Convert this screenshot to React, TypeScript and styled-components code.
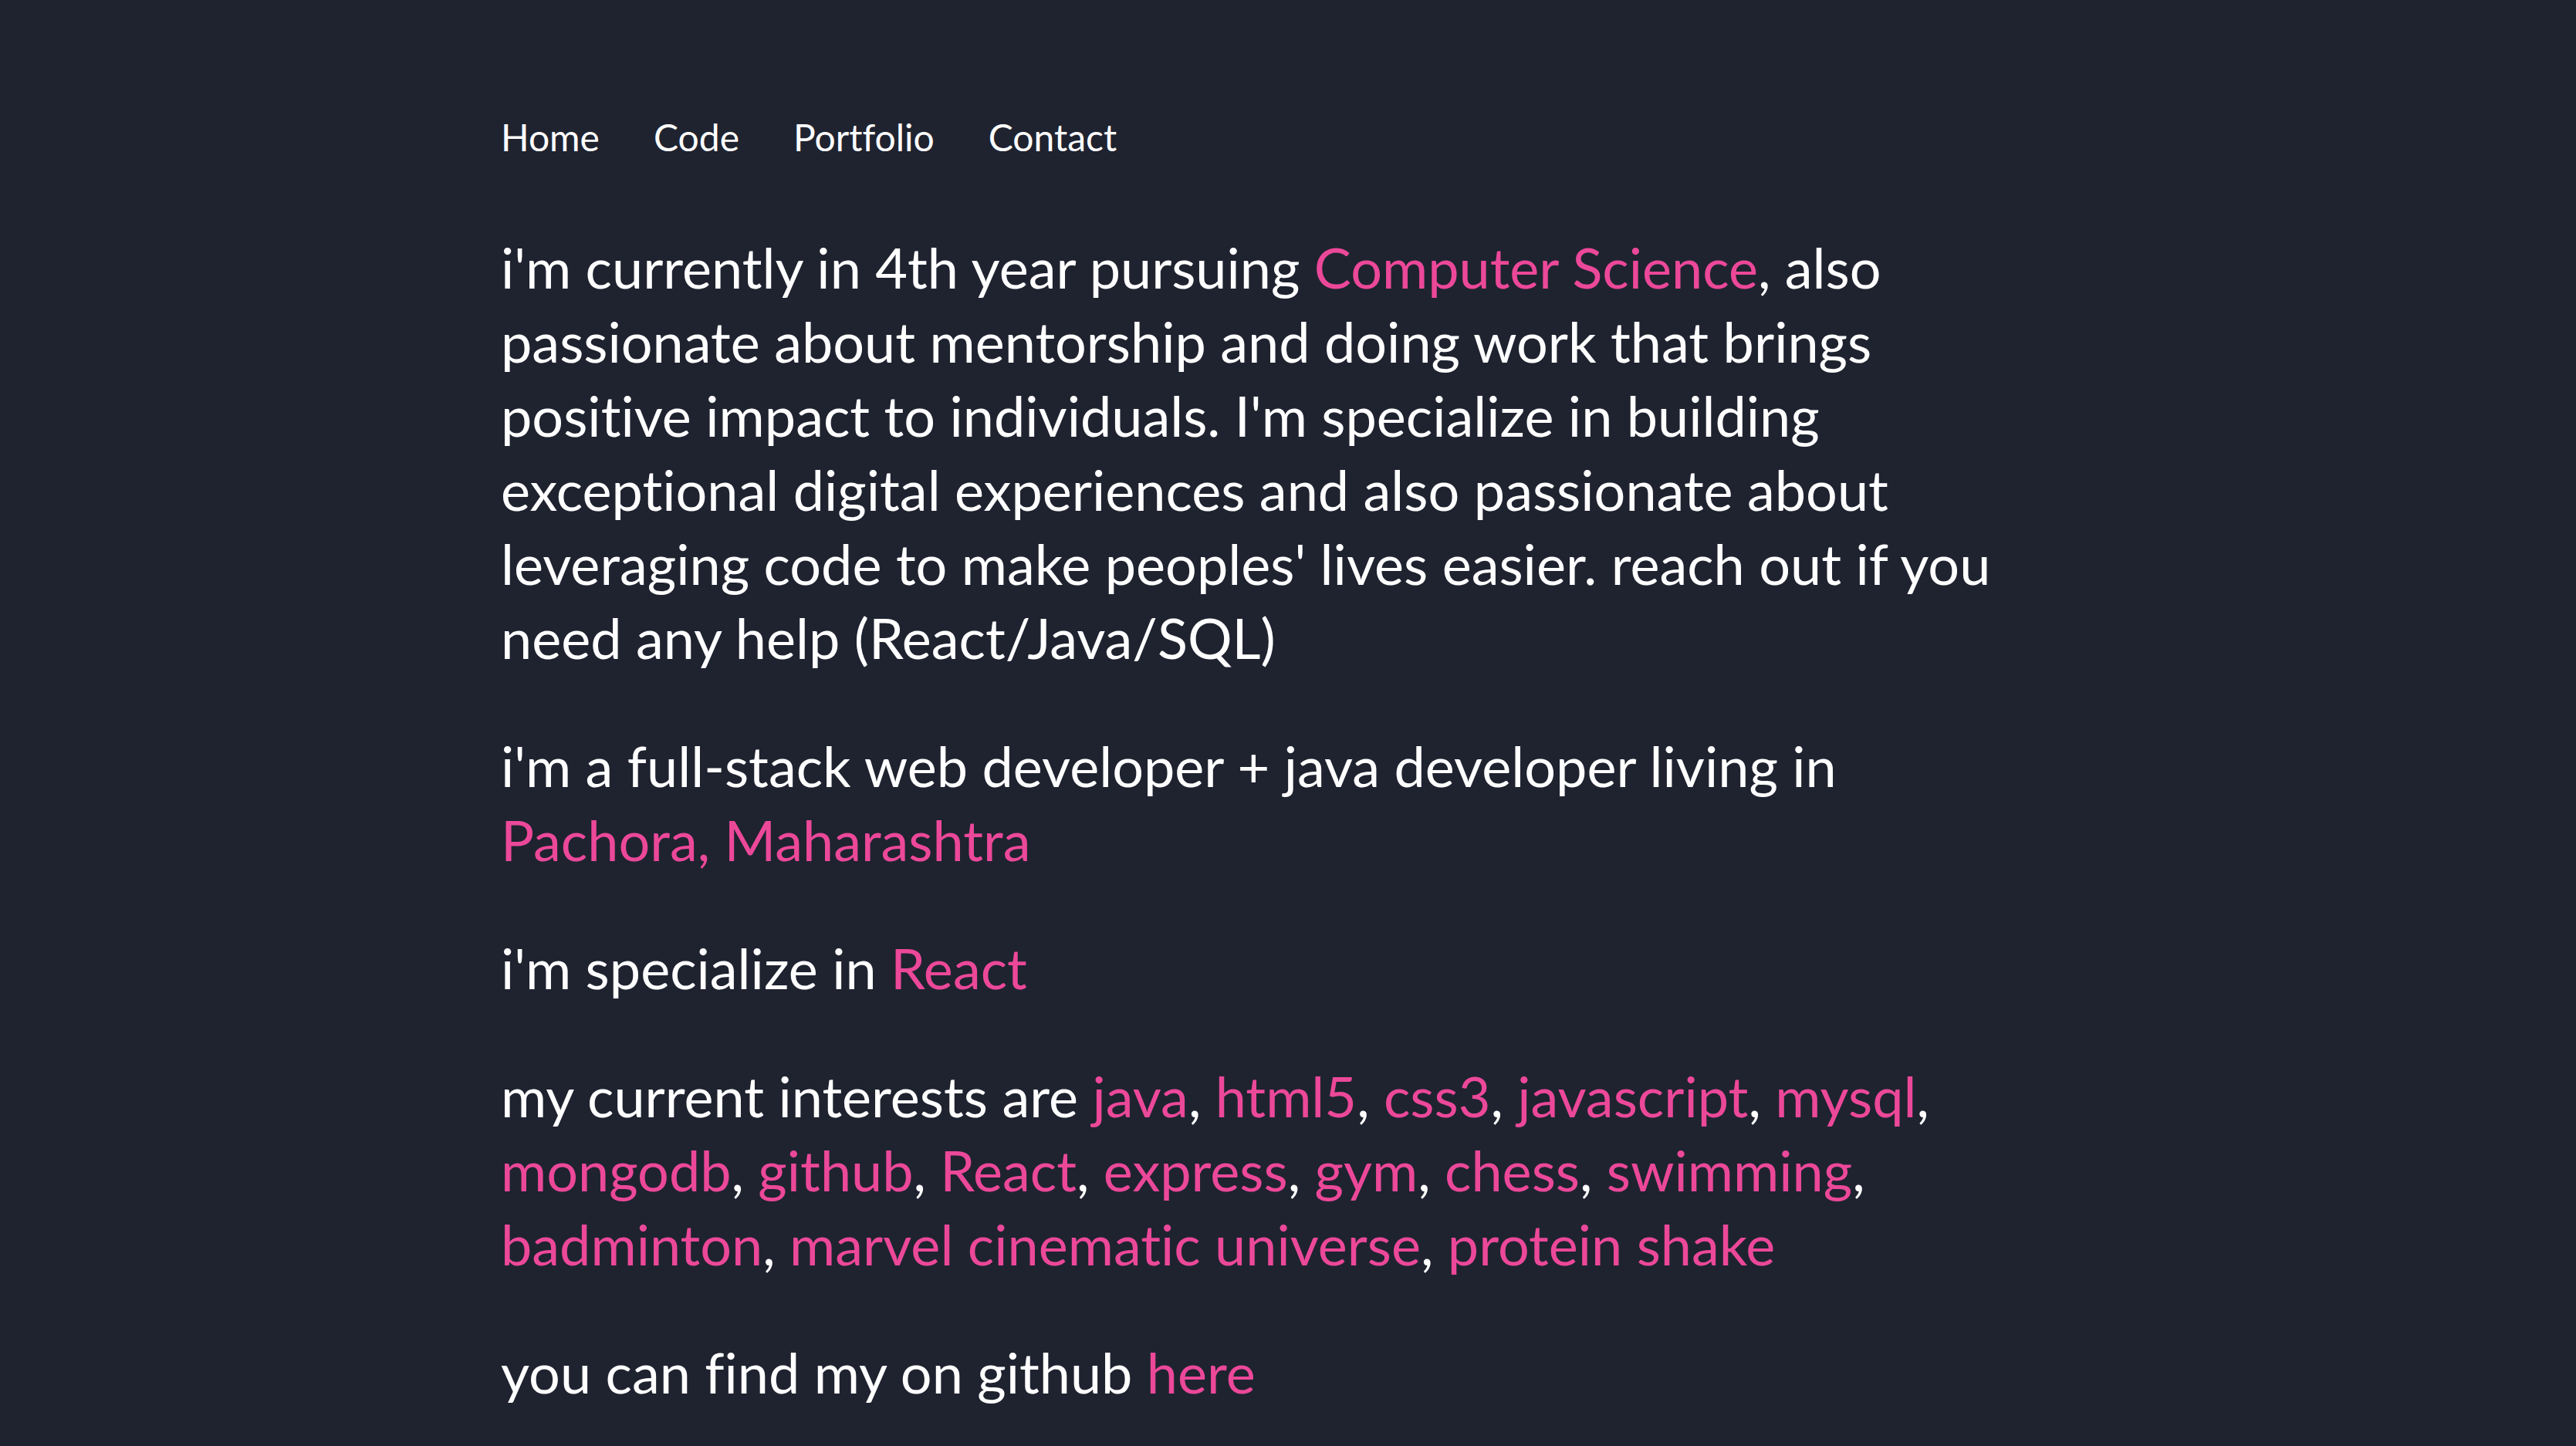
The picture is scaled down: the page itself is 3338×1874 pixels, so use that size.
import React from "react";
import styled, { createGlobalStyle } from "styled-components";

const GlobalStyle = createGlobalStyle`
  html, body {
    margin: 0;
    padding: 0;
    background: #1f2330;
  }
  body {
    font-family: Lato, "Open Sans", "Liberation Sans", sans-serif;
    font-variant-ligatures: none;
    color: #ffffff;
    -webkit-font-smoothing: antialiased;
  }
`;

const Page = styled.div`
  min-height: 1874px;
  background: #1f2330;
`;

const Container = styled.main`
  max-width: 2040px;
  margin: 0 auto;
  padding-top: 146px;
  box-sizing: border-box;
`;

const Nav = styled.nav`
  display: flex;
  align-items: center;
  gap: 70px;
`;

const NavLink = styled.a`
  color: #ffffff;
  font-size: 48px;
  line-height: 64px;
  text-decoration: none;
  cursor: pointer;
`;

const Content = styled.section`
  display: flex;
  flex-direction: column;
  gap: 70px;
  margin-top: 88px;
`;

const Paragraph = styled.p`
  margin: 0;
  font-size: 72px;
  line-height: 96px;
  color: #ffffff;
`;

const Highlight = styled.a`
  color: #ec4899;
  text-decoration: none;
  white-space: nowrap;
`;

const interestLines = [
  ["java", "html5", "css3", "javascript", "mysql"],
  ["mongodb", "github", "React", "express", "gym", "chess", "swimming"],
  ["badminton", "marvel cinematic universe", "protein shake"],
];

export default function App() {
  return (
    <Page>
      <GlobalStyle />
      <Container>
        <Nav>
          <NavLink>Home</NavLink>
          <NavLink>Code</NavLink>
          <NavLink>Portfolio</NavLink>
          <NavLink>Contact</NavLink>
        </Nav>
        <Content>
          <Paragraph>
            i'm currently in 4th year pursuing <Highlight>Computer Science</Highlight>, also
            <br />
            passionate about mentorship and doing work that brings
            <br />
            positive impact to individuals. I'm specialize in building
            <br />
            exceptional digital experiences and also passionate about
            <br />
            leveraging code to make peoples' lives easier. reach out if you
            <br />
            need any help (React/Java/SQL)
          </Paragraph>
          <Paragraph>
            i'm a full-stack web developer + java developer living in
            <br />
            <Highlight>Pachora, Maharashtra</Highlight>
          </Paragraph>
          <Paragraph>
            i'm specialize in <Highlight>React</Highlight>
          </Paragraph>
          <Paragraph>
            my current interests are{" "}
            {interestLines.map((line, li) => (
              <React.Fragment key={li}>
                {line.map((item, i) => (
                  <React.Fragment key={item}>
                    <Highlight>{item}</Highlight>
                    {li === interestLines.length - 1 && i === line.length - 1
                      ? ""
                      : i === line.length - 1
                      ? ","
                      : ", "}
                  </React.Fragment>
                ))}
                {li < interestLines.length - 1 ? <br /> : null}
              </React.Fragment>
            ))}
          </Paragraph>
          <Paragraph>
            you can find my on github <Highlight>here</Highlight>
          </Paragraph>
        </Content>
      </Container>
    </Page>
  );
}
